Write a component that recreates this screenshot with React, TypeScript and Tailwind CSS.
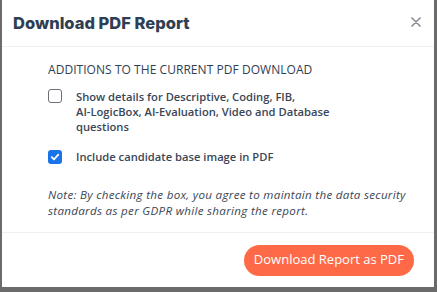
const App = () => (
  <div className="w-[437px] h-[292px] bg-[#6b6b6b] overflow-hidden font-['Open_Sans',sans-serif]">
    <div className="ml-[2px] w-[432px] h-[287px] bg-white flex flex-col">
      <div className="h-[47px] flex items-center justify-between pl-[11px] pr-[12px] border-b border-[#eef0f2]">
        <h2 className="font-['Inter',sans-serif] text-[16.5px] font-extrabold text-[#2f3e52]">Download PDF Report</h2>
        <svg width="10" height="10" viewBox="0 0 10 10" className="mr-[1px] -mt-[3px]">
          <path d="M1 1 L9 9 M9 1 L1 9" stroke="#8a8f96" strokeWidth="1.7" strokeLinecap="round" />
        </svg>
      </div>
      <div className="flex-1 pl-[46px] pr-2 pt-[14px] border-b border-[#eef0f2]">
        <h3 className="text-[12px] text-[#2f3e52] uppercase tracking-[0.05px]">Additions to the current PDF download</h3>
        <label className="flex items-start gap-[14px] mt-[9px]">
          <span className="mt-[1px] w-[14px] h-[14px] rounded-[3px] border-[1.5px] border-[#6b6f75] bg-white shrink-0" />
          <span className="text-[11.2px] font-semibold leading-[15px] text-[#3a4656] pt-[1px]">
            Show details for Descriptive, Coding, FIB,
            <br />
            AI-LogicBox, AI-Evaluation, Video and Database
            <br />
            questions
          </span>
        </label>
        <label className="flex items-center gap-[14px] mt-[15px]">
          <span className="w-[14px] h-[14px] rounded-[3px] bg-[#1a73e8] shrink-0 flex items-center justify-center">
            <svg width="10" height="10" viewBox="0 0 10 10" fill="none">
              <path d="M1.8 5.2 L4 7.3 L8.3 2.7" stroke="white" strokeWidth="1.8" strokeLinecap="round" strokeLinejoin="round" />
            </svg>
          </span>
          <span className="text-[11.2px] font-semibold text-[#3a4656]">Include candidate base image in PDF</span>
        </label>
        <p className="mt-[21px] text-[11.6px] italic leading-[16px] tracking-[0.3px] text-[#3a4656] whitespace-nowrap">
          Note: By checking the box, you agree to maintain the data security
          <br />
          standards as per GDPR while sharing the report.
        </p>
      </div>
      <div className="h-[54px] flex items-center justify-end pr-[20px]">
        <button className="h-[31px] px-[10px] rounded-full bg-[#fe6a47] text-white text-[13px]">
          Download Report as PDF
        </button>
      </div>
    </div>
  </div>
);

export default App;
